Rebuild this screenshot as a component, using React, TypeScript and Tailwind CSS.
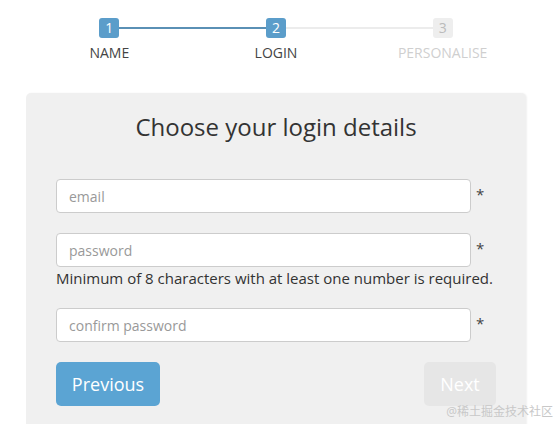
import React from "react";

const font = { fontFamily: '"Open Sans", "Noto Sans CJK SC", sans-serif' };

function Field({ placeholder, type = "text" }: { placeholder: string; type?: string }) {
  return (
    <div className="flex items-center">
      <input
        type={type}
        placeholder={placeholder}
        className="w-[415px] h-[34px] rounded-[4px] border border-[#cccccc] bg-white px-[12px] text-[14px] text-[#555] placeholder:text-[#999] outline-none"
      />
      <span className="ml-[5px] text-[15px] text-[#444] leading-none -mt-[4px]">*</span>
    </div>
  );
}

export default function App() {
  return (
    <div className="relative w-[556px] h-[424px] overflow-hidden bg-white" style={font}>
      {/* Stepper */}
      <div className="ml-[26px] w-[500px] pt-[18px] grid grid-cols-3">
        <div className="flex flex-col items-center relative">
          <div className="absolute top-[9px] left-[93px] w-[157px] h-[2px] bg-[#5a90b5]" />
          <div className="relative w-[20px] h-[20px] rounded-[3px] bg-[#5b9dca] text-white text-[14px] leading-[20px] text-center">1</div>
          <div className="mt-[6px] text-[14px] leading-[18px] text-[#444]">NAME</div>
        </div>
        <div className="flex flex-col items-center relative">
          <div className="absolute top-[9px] left-[93px] w-[157px] h-[2px] bg-[#ececec]" />
          <div className="relative w-[20px] h-[20px] rounded-[3px] bg-[#5b9dca] text-white text-[14px] leading-[20px] text-center">2</div>
          <div className="mt-[6px] text-[14px] leading-[18px] text-[#444]">LOGIN</div>
        </div>
        <div className="flex flex-col items-center relative">
          <div className="relative w-[20px] h-[20px] rounded-[3px] bg-[#eeeeee] text-[#bbb] text-[14px] leading-[20px] text-center">3</div>
          <div className="mt-[6px] text-[14px] leading-[18px] text-[#cfcfcf]">PERSONALISE</div>
        </div>
      </div>

      {/* Card */}
      <div className="ml-[26px] mt-[31px] w-[500px] h-[350px] rounded-t-[5px] bg-[#f0f0f0] shadow-[1px_0_2px_rgba(0,0,0,0.06)] px-[30px] pt-[17px]">
        <h1 className="text-center text-[24px] leading-[34px] text-[#333] font-normal">Choose your login details</h1>
        <div className="mt-[35px] flex flex-col">
          <Field placeholder="email" />
          <div className="mt-[20px]">
            <Field placeholder="password" type="password" />
          </div>
          <p className="mt-[1px] text-[15px] leading-[20px] text-[#333]">
            Minimum of 8 characters with at least one number is required.
          </p>
          <div className="mt-[20px]">
            <Field placeholder="confirm password" type="password" />
          </div>
          <div className="mt-[20px] flex justify-between">
            <button className="w-[104px] h-[44px] rounded-[5px] bg-[#5ba4d3] text-white text-[18px]">Previous</button>
            <button className="w-[72px] h-[44px] rounded-[5px] bg-[#e6e6e6] text-white text-[18px]">Next</button>
          </div>
        </div>
      </div>

      <div className="absolute right-[3px] top-[404px] text-[12px] leading-[16px] text-[#c8c8c8]">@稀土掘金技术社区</div>
    </div>
  );
}
